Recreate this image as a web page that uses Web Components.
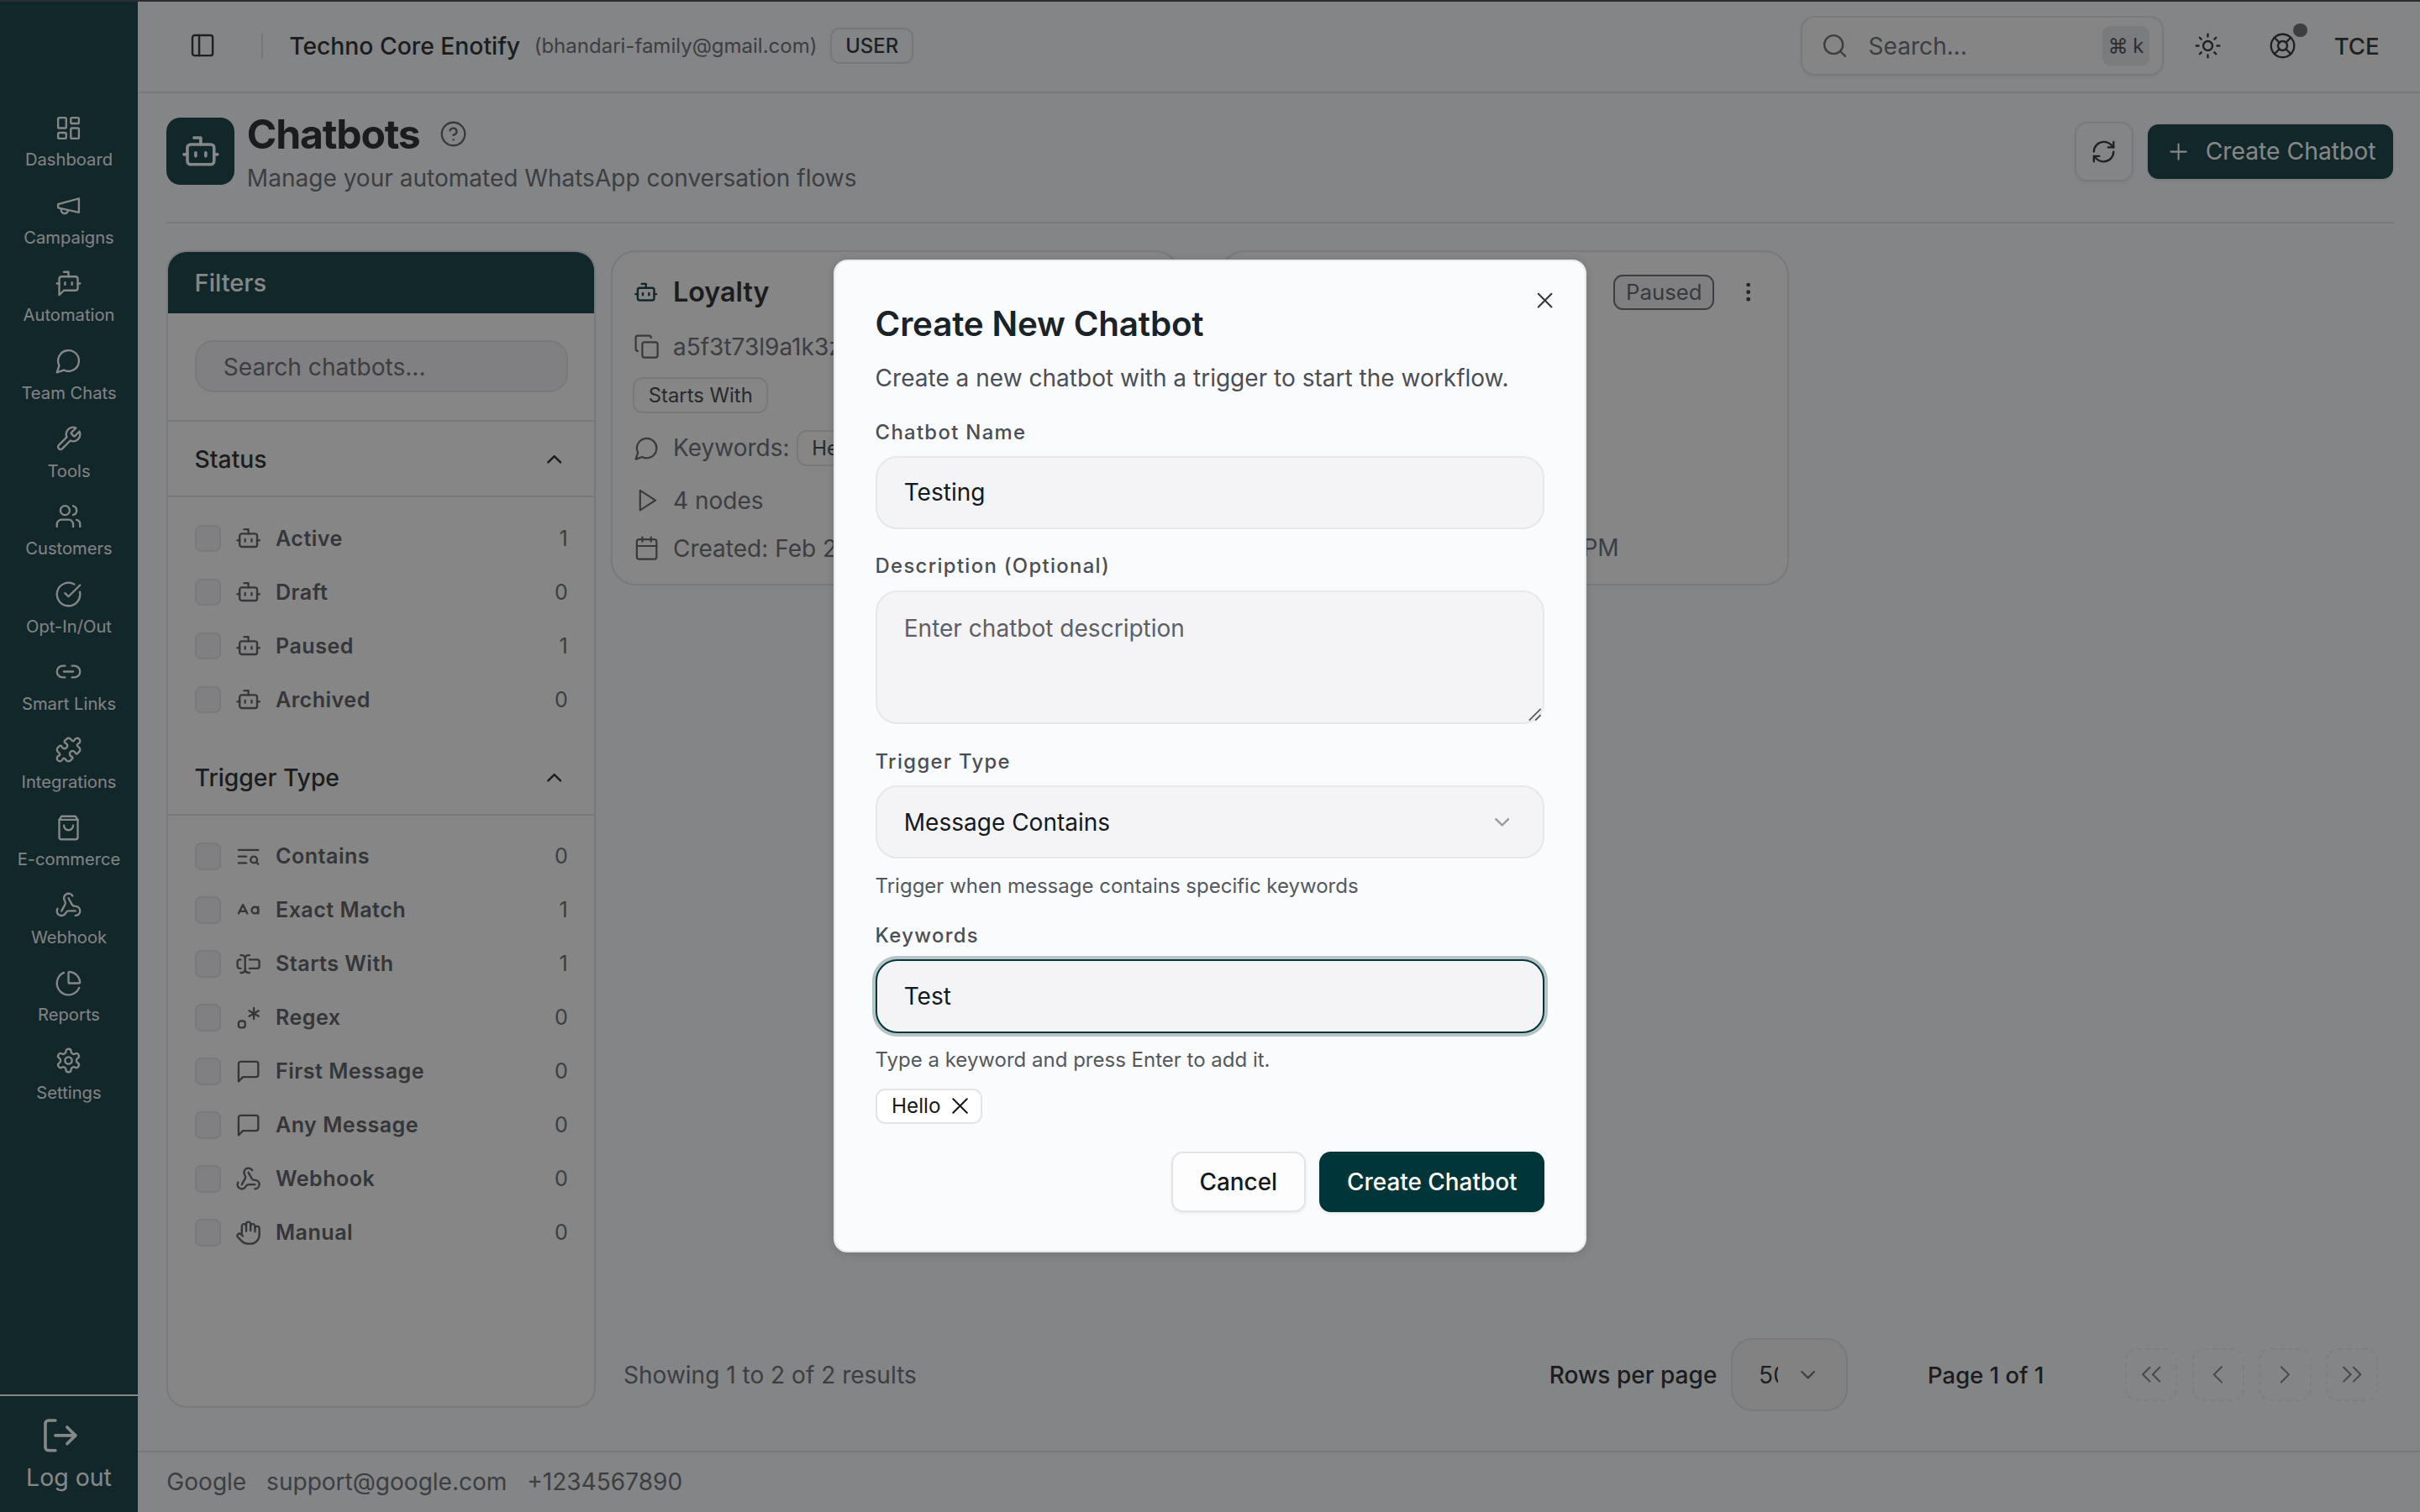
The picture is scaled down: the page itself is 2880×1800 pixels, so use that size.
<!DOCTYPE html>
<html lang="en">
<head>
<meta charset="utf-8">
<title>Chatbots</title>
<style>
  html,body{margin:0;padding:0;background:#f8fafb;overflow:hidden}
  body{font-family:Inter,"Liberation Sans",sans-serif;color:#13161a}
</style>
</head>
<body>
<app-shell>
  <side-nav slot="nav">
    <nav-item icon="dashboard">Dashboard</nav-item>
    <nav-item icon="megaphone">Campaigns</nav-item>
    <nav-item icon="botmsg">Automation</nav-item>
    <nav-item icon="circle-msg">Team Chats</nav-item>
    <nav-item icon="wrench">Tools</nav-item>
    <nav-item icon="users">Customers</nav-item>
    <nav-item icon="check">Opt-In/Out</nav-item>
    <nav-item icon="link">Smart Links</nav-item>
    <nav-item icon="puzzle">Integrations</nav-item>
    <nav-item icon="bag">E-commerce</nav-item>
    <nav-item icon="webhook">Webhook</nav-item>
    <nav-item icon="pie">Reports</nav-item>
    <nav-item icon="settings">Settings</nav-item>
  </side-nav>
  <top-bar slot="top"></top-bar>
  <page-heading slot="heading"></page-heading>
  <filter-panel slot="filters">
    <filter-group title="Status" class="first">
      <filter-row icon="bot" count="1">Active</filter-row>
      <filter-row icon="bot" count="0">Draft</filter-row>
      <filter-row icon="bot" count="1">Paused</filter-row>
      <filter-row icon="bot" count="0">Archived</filter-row>
    </filter-group>
    <filter-group title="Trigger Type">
      <filter-row icon="text-search" count="0">Contains</filter-row>
      <filter-row icon="case" count="1">Exact Match</filter-row>
      <filter-row icon="cursor-input" count="1">Starts With</filter-row>
      <filter-row icon="regex" count="0">Regex</filter-row>
      <filter-row icon="square-msg" count="0">First Message</filter-row>
      <filter-row icon="square-msg" count="0">Any Message</filter-row>
      <filter-row icon="webhook" count="0">Webhook</filter-row>
      <filter-row icon="hand" count="0">Manual</filter-row>
    </filter-group>
  </filter-panel>
  <results-area slot="results">
    <bot-card>
      <card-title slot="head" icon="bot">Loyalty</card-title>
      <meta-row icon="copy" style="margin-top:11.5px">a5f3t73l9a1k3z</meta-row>
      <ui-tag style="margin-top:7.5px">Starts With</ui-tag>
      <meta-row icon="circle-msg" style="margin-top:10.5px">Keywords: <ui-tag style="margin-left:1.5px">Hello</ui-tag></meta-row>
      <meta-row icon="play" style="margin-top:10px">4 nodes</meta-row>
      <meta-row icon="calendar" style="margin-top:7px">Created: Feb 2</meta-row>
    </bot-card>
    <bot-card>
      <status-tag slot="tail">Paused</status-tag>
      <ui-icon slot="tail" name="kebab" size="16" style="margin-left:14px;color:#2b2e33"></ui-icon>
      <meta-row icon="calendar" style="margin-top:auto">Created: Feb 2, 2026, 1:45 PM</meta-row>
    </bot-card>
    <pager-bar slot="pager"></pager-bar>
  </results-area>
  <site-footer slot="footer"></site-footer>
  <create-dialog slot="dialog"></create-dialog>
</app-shell>

<script>
const ICONS = {
  dashboard:'<rect x="3" y="3" width="7" height="9" rx="1"/><rect x="14" y="3" width="7" height="5" rx="1"/><rect x="14" y="12" width="7" height="9" rx="1"/><rect x="3" y="16" width="7" height="5" rx="1"/>',
  megaphone:'<path d="m3 11 18-5v12L3 14v-3z"/><path d="M11.6 16.8a3 3 0 1 1-5.8-1.6"/>',
  botmsg:'<path d="M12 6V2H8"/><path d="m8 18-4 4V8a2 2 0 0 1 2-2h12a2 2 0 0 1 2 2v8a2 2 0 0 1-2 2Z"/><path d="M2 12h2"/><path d="M9 11v2"/><path d="M15 11v2"/><path d="M20 12h2"/>',
  'circle-msg':'<path d="M7.9 20A9 9 0 1 0 4 16.1L2 22Z"/>',
  wrench:'<path d="M14.7 6.3a1 1 0 0 0 0 1.4l1.6 1.6a1 1 0 0 0 1.4 0l3.77-3.77a6 6 0 0 1-7.94 7.94l-6.91 6.91a2.12 2.12 0 0 1-3-3l6.91-6.91a6 6 0 0 1 7.94-7.94l-3.76 3.76z"/>',
  users:'<path d="M16 21v-2a4 4 0 0 0-4-4H6a4 4 0 0 0-4 4v2"/><circle cx="9" cy="7" r="4"/><path d="M22 21v-2a4 4 0 0 0-3-3.87"/><path d="M16 3.13a4 4 0 0 1 0 7.75"/>',
  check:'<path d="M21.801 10A10 10 0 1 1 17 3.335"/><path d="m9 11 3 3L22 4"/>',
  link:'<path d="M9 17H7A5 5 0 0 1 7 7h2"/><path d="M15 7h2a5 5 0 1 1 0 10h-2"/><line x1="8" x2="16" y1="12" y2="12"/>',
  puzzle:'<path d="M19.439 7.85c-.049.322.059.648.289.878l1.568 1.568c.47.47.706 1.087.706 1.704s-.235 1.233-.706 1.704l-1.611 1.611a.98.98 0 0 1-.837.276c-.47-.07-.802-.48-.968-.925a2.501 2.501 0 1 0-3.214 3.214c.446.166.855.497.925.968a.979.979 0 0 1-.276.837l-1.61 1.61a2.404 2.404 0 0 1-1.705.707 2.402 2.402 0 0 1-1.704-.706l-1.568-1.568a1.026 1.026 0 0 0-.877-.29c-.493.074-.84.504-1.02.968a2.5 2.5 0 1 1-3.237-3.237c.464-.18.894-.527.967-1.02a1.026 1.026 0 0 0-.289-.877l-1.568-1.568A2.402 2.402 0 0 1 1.998 12c0-.617.236-1.234.706-1.704L4.23 8.77c.24-.24.581-.353.917-.303.515.077.877.528 1.073 1.01a2.5 2.5 0 1 0 3.259-3.259c-.482-.196-.933-.558-1.01-1.073-.05-.336.062-.676.303-.917l1.525-1.525A2.402 2.402 0 0 1 12 1.998c.617 0 1.234.236 1.704.706l1.568 1.568c.23.23.556.338.877.29.493-.074.84-.504 1.02-.968a2.5 2.5 0 1 1 3.237 3.237c-.464.18-.894.527-.967 1.02Z"/>',
  bag:'<path d="M6 2 4 5v15a2 2 0 0 0 2 2h12a2 2 0 0 0 2-2V5l-2-3Z"/><path d="M4 5h16"/><path d="M16 10a4 4 0 0 1-8 0"/>',
  webhook:'<path d="M18 16.98h-5.99c-1.1 0-1.95.94-2.48 1.9A4 4 0 0 1 2 17c.01-.7.2-1.4.57-2"/><path d="m6 17 3.13-5.78c.53-.97.1-2.18-.5-3.1a4 4 0 1 1 6.89-4.06"/><path d="m12 6 3.13 5.73C15.66 12.7 16.9 13 18 13a4 4 0 0 1 0 8"/>',
  pie:'<path d="M21 12c.552 0 1.005-.449.95-.998a10 10 0 0 0-8.953-8.951c-.55-.055-.998.398-.998.95v8a1 1 0 0 0 1 1z"/><path d="M21.21 15.89A10 10 0 1 1 8 2.83"/>',
  settings:'<path d="M12.22 2h-.44a2 2 0 0 0-2 2v.18a2 2 0 0 1-1 1.73l-.43.25a2 2 0 0 1-2 0l-.15-.08a2 2 0 0 0-2.73.73l-.22.38a2 2 0 0 0 .73 2.73l.15.1a2 2 0 0 1 1 1.72v.51a2 2 0 0 1-1 1.74l-.15.09a2 2 0 0 0-.73 2.73l.22.38a2 2 0 0 0 2.73.73l.15-.08a2 2 0 0 1 2 0l.43.25a2 2 0 0 1 1 1.73V20a2 2 0 0 0 2 2h.44a2 2 0 0 0 2-2v-.18a2 2 0 0 1 1-1.73l.43-.25a2 2 0 0 1 2 0l.15.08a2 2 0 0 0 2.73-.73l.22-.39a2 2 0 0 0-.73-2.73l-.15-.08a2 2 0 0 1-1-1.74v-.5a2 2 0 0 1 1-1.74l.15-.09a2 2 0 0 0 .73-2.73l-.22-.38a2 2 0 0 0-2.73-.73l-.15.08a2 2 0 0 1-2 0l-.43-.25a2 2 0 0 1-1-1.73V4a2 2 0 0 0-2-2z"/><circle cx="12" cy="12" r="3"/>',
  logout:'<path d="M9 21H5a2 2 0 0 1-2-2V5a2 2 0 0 1 2-2h4"/><polyline points="16 17 21 12 16 7"/><line x1="21" x2="9" y1="12" y2="12"/>',
  bot:'<path d="M12 8V4H8"/><rect width="16" height="12" x="4" y="8" rx="2"/><path d="M2 14h2"/><path d="M20 14h2"/><path d="M15 13v2"/><path d="M9 13v2"/>',
  'text-search':'<path d="M21 6H3"/><path d="M10 12H3"/><path d="M10 18H3"/><circle cx="17" cy="15" r="3"/><path d="m21 19-1.9-1.9"/>',
  case:'<path d="m3 15 4-8 4 8"/><path d="M4 13h6"/><circle cx="18" cy="12" r="3"/><path d="M21 9v6"/>',
  'cursor-input':'<path d="M5 4h1a3 3 0 0 1 3 3 3 3 0 0 1 3-3h1"/><path d="M13 20h-1a3 3 0 0 1-3-3 3 3 0 0 1-3 3H5"/><path d="M5 16H4a2 2 0 0 1-2-2v-4a2 2 0 0 1 2-2h1"/><path d="M13 8h7a2 2 0 0 1 2 2v4a2 2 0 0 1-2 2h-7"/><path d="M9 7v10"/>',
  regex:'<path d="M17 3v10"/><path d="m12.67 5.5 8.66 5"/><path d="m12.67 10.5 8.66-5"/><path d="M9 17a2 2 0 0 0-2-2H5a2 2 0 0 0-2 2v2a2 2 0 0 0 2 2h2a2 2 0 0 0 2-2v-2z"/>',
  'square-msg':'<path d="M21 15a2 2 0 0 1-2 2H7l-4 4V5a2 2 0 0 1 2-2h14a2 2 0 0 1 2 2z"/>',
  hand:'<path d="M18 11V6a2 2 0 0 0-2-2a2 2 0 0 0-2 2"/><path d="M14 10V4a2 2 0 0 0-2-2a2 2 0 0 0-2 2v2"/><path d="M10 10.5V6a2 2 0 0 0-2-2a2 2 0 0 0-2 2v8"/><path d="M18 8a2 2 0 1 1 4 0v6a8 8 0 0 1-8 8h-2c-2.8 0-4.5-.86-5.99-2.34l-3.6-3.6a2 2 0 0 1 2.83-2.82L7 15"/>',
  panel:'<rect width="18" height="18" x="3" y="3" rx="2"/><path d="M9 3v18"/>',
  help:'<circle cx="12" cy="12" r="10"/><path d="M9.09 9a3 3 0 0 1 5.83 1c0 2-3 3-3 3"/><path d="M12 17h.01"/>',
  copy:'<rect width="14" height="14" x="8" y="8" rx="2"/><path d="M4 16c-1.1 0-2-.9-2-2V4c0-1.1.9-2 2-2h10c1.1 0 2 .9 2 2"/>',
  play:'<polygon points="6 3 20 12 6 21 6 3"/>',
  calendar:'<path d="M8 2v4"/><path d="M16 2v4"/><rect width="18" height="18" x="3" y="4" rx="2"/><path d="M3 10h18"/>',
  refresh:'<path d="M3 12a9 9 0 0 1 9-9 9.75 9.75 0 0 1 6.74 2.74L21 8"/><path d="M21 3v5h-5"/><path d="M21 12a9 9 0 0 1-9 9 9.75 9.75 0 0 1-6.74-2.74L3 16"/><path d="M8 16H3v5"/>',
  plus:'<path d="M5 12h14"/><path d="M12 5v14"/>',
  search:'<circle cx="11" cy="11" r="8"/><path d="m21 21-4.3-4.3"/>',
  sun:'<circle cx="12" cy="12" r="4"/><path d="M12 2v2"/><path d="M12 20v2"/><path d="m4.93 4.93 1.41 1.41"/><path d="m17.66 17.66 1.41 1.41"/><path d="M2 12h2"/><path d="M20 12h2"/><path d="m6.34 17.66-1.41 1.41"/><path d="m19.07 4.93-1.41 1.41"/>',
  buoy:'<circle cx="12" cy="12" r="10"/><path d="m4.93 4.93 4.24 4.24"/><path d="m14.83 9.17 4.24-4.24"/><path d="m14.83 14.83 4.24 4.24"/><path d="m9.17 14.83-4.24 4.24"/><circle cx="12" cy="12" r="4"/>',
  'chev-up':'<path d="m18 15-6-6-6 6"/>',
  'chev-down':'<path d="m6 9 6 6 6-6"/>',
  'chev-left':'<path d="m15 18-6-6 6-6"/>',
  'chev-right':'<path d="m9 18 6-6-6-6"/>',
  'chevs-left':'<path d="m11 17-5-5 5-5"/><path d="m18 17-5-5 5-5"/>',
  'chevs-right':'<path d="m6 17 5-5-5-5"/><path d="m13 17 5-5-5-5"/>',
  x:'<path d="M18 6 6 18"/><path d="m6 6 12 12"/>',
  kebab:'<circle cx="12" cy="12" r="1"/><circle cx="12" cy="5" r="1"/><circle cx="12" cy="19" r="1"/>'
};

function comp(tag, css, html){
  class C extends HTMLElement{
    constructor(){ super(); this.attachShadow({mode:'open'}); }
    connectedCallback(){
      if(this._done) return; this._done = true;
      const h = typeof html === 'function' ? html(this) : html;
      this.shadowRoot.innerHTML = '<style>'+css+'</style>'+h;
    }
  }
  customElements.define(tag, C);
}

comp('ui-icon',
  ':host{display:inline-flex;flex:none;line-height:0}svg{display:block;fill:none;stroke:currentColor;stroke-linecap:round;stroke-linejoin:round}',
  el=>{const s=el.getAttribute('size')||16,w=el.getAttribute('stroke')||2;
    return '<svg xmlns="http://www.w3.org/2000/svg" viewBox="0 0 24 24" width="'+s+'" height="'+s+'" stroke-width="'+w+'">'+ICONS[el.getAttribute('name')]+'</svg>';});

comp('app-shell',
  `:host{display:block;zoom:1.83673;width:1568px;height:980px;position:relative;overflow:hidden;background:#f8fafb}
   .frame{display:grid;grid-template-columns:89.3px 1fr;width:1568px;height:980px}
   .main{display:flex;flex-direction:column;min-width:0;height:980px}
   .body{flex:1;min-height:0;display:flex;flex-direction:column;padding:0 17px 25.5px 18.7px}
   .row{flex:1;min-height:0;display:flex;gap:10px;margin-top:17.5px}`,
  `<div class="frame"><slot name="nav"></slot>
    <div class="main"><slot name="top"></slot>
      <div class="body"><slot name="heading"></slot>
        <div class="row"><slot name="filters"></slot><slot name="results"></slot></div>
      </div>
      <slot name="footer"></slot>
    </div></div><slot name="dialog"></slot>`);

comp('side-nav',
  `:host{display:flex;flex-direction:column;background:#012e34;color:#fff;height:980px}
   .items{flex:1;padding-top:67.1px;display:flex;flex-direction:column}
   .out{border-top:1.1px solid #ffffff;height:76px;box-sizing:border-box;display:flex;flex-direction:column;align-items:center;padding-top:12.5px}
   ui-icon{margin-right:11px}
   .lbl{font-size:15.5px;line-height:20px;margin-top:4.5px}`,
  `<div class="items"><slot></slot></div>
   <div class="out"><ui-icon name="logout" size="26" stroke="1.8"></ui-icon><div class="lbl">Log out</div></div>`);

comp('nav-item',
  `:host{display:flex;flex-direction:column;align-items:center;height:50.4px;box-sizing:border-box;padding-top:6.7px}
   .t{font-size:11px;line-height:15px;margin-top:4.2px;white-space:nowrap;color:#f4f5f6}`,
  el=>'<ui-icon name="'+el.getAttribute('icon')+'" size="18" stroke="1.7"></ui-icon><div class="t"><slot></slot></div>');

comp('top-bar',
  `:host{display:flex;align-items:center;height:60.5px;box-sizing:border-box;border-bottom:1.1px solid #dfe0e4;padding:0 24px 0 28px;flex:none}
   .tg{width:28px;display:flex;justify-content:center;color:#1d2024}
   .sep{width:1.1px;height:17px;background:#dcdde2;margin:0 17px 0 24px}
   .name{font-size:15.4px;font-weight:500;color:#13161a;white-space:nowrap}
   .mail{font-size:13.07px;color:#5c6066;margin-left:9px;white-space:nowrap}
   .role{font-size:13px;font-weight:500;margin-left:8.5px;border:1.1px solid #dcdde2;border-radius:6px;height:23px;box-sizing:border-box;width:54px;display:flex;align-items:center;justify-content:center;color:#1a1d21}
   .sp{flex:1}
   .search{width:235.5px;height:38.5px;box-sizing:border-box;border:1.1px solid #dfe0e4;border-radius:9px;background:#fbfaf9;display:flex;align-items:center;padding:0 8px 0 12px;box-shadow:0 1px 2px rgba(0,0,0,.05);color:#5c6066}
   .search .t{font-size:15.3px;margin-left:13px;flex:1}
   .kbd{width:31px;height:26px;border-radius:5px;background:#e3e4e8;display:flex;align-items:center;justify-content:center;gap:3px;font-size:13px;color:#383b40}
   .sun{margin-left:19.5px;color:#1d2024}
   .help{margin-left:30.5px;position:relative;color:#1d2024;display:flex}
   .dot{position:absolute;width:9px;height:9px;border-radius:50%;background:#5d6066;right:-7px;top:-5.5px}
   .av{width:34px;height:35px;border-radius:50%;background:#fbfbfa;margin-left:22px;display:flex;align-items:center;justify-content:center;font-size:15px;font-weight:500;color:#1a1d21}`,
  `<div class="tg"><ui-icon name="panel" size="17.5" stroke="1.8"></ui-icon></div><div class="sep"></div>
   <div class="name">Techno Core Enotify</div><div class="mail">(bhandari-family@gmail.com)</div><div class="role">USER</div>
   <div class="sp"></div>
   <div class="search"><ui-icon name="search" size="18" stroke="1.7"></ui-icon><div class="t">Search...</div><div class="kbd"><span>⌘</span><span>k</span></div></div>
   <ui-icon class="sun" name="sun" size="18" stroke="1.7"></ui-icon>
   <div class="help"><ui-icon name="buoy" size="18" stroke="1.7"></ui-icon><span class="dot"></span></div>
   <div class="av">TCE</div>`);

comp('page-heading',
  `:host{display:flex;align-items:flex-start;height:84.3px;box-sizing:border-box;border-bottom:1.1px solid #dfe0e4;padding-top:15.5px;flex:none}
   .box{width:44px;height:44px;border-radius:9px;background:#012e34;color:#fff;display:flex;align-items:center;justify-content:center;flex:none}
   .tx{margin-left:8px;flex:1;margin-top:-4px}
   .h{display:flex;align-items:center;height:30px}
   h1{margin:0;font-size:26.2px;font-weight:700;letter-spacing:-.025em;line-height:30px;color:#13161a}
   .h ui-icon{margin-left:13px;color:#53565c}
   p{margin:1.7px 0 0;font-size:15.27px;line-height:24px;color:#5c6066}
   .act{display:flex;align-items:center;gap:9px;margin-top:3px;margin-right:.5px}
   .rf{width:38.5px;height:38.5px;box-sizing:border-box;border:1.1px solid #dfe0e4;border-radius:8px;display:flex;align-items:center;justify-content:center;color:#1d2024;box-shadow:0 1px 2px rgba(0,0,0,.05)}
   .cr{height:35px;width:159px;border-radius:7px;background:#012e34;color:#fff;display:flex;align-items:center;font-size:15.4px;box-sizing:border-box;padding-left:11.5px;gap:9px;box-shadow:0 1px 2px rgba(0,0,0,.1)}`,
  `<div class="box"><ui-icon name="bot" size="26" stroke="1.8"></ui-icon></div>
   <div class="tx"><div class="h"><h1>Chatbots</h1><ui-icon name="help" size="18" stroke="1.7"></ui-icon></div><p>Manage your automated WhatsApp conversation flows</p></div>
   <div class="act"><div class="rf"><ui-icon name="refresh" size="17" stroke="1.8"></ui-icon></div><div class="cr"><ui-icon name="plus" size="17" stroke="1.6"></ui-icon><span>Create Chatbot</span></div></div>`);

comp('filter-panel',
  `:host{display:block;width:278px;flex:none;box-sizing:border-box;border:1.1px solid #dfe0e4;border-radius:13px;overflow:hidden;background:#fcfcfb;margin-bottom:2px}
   .hd{height:39.6px;background:#012e34;color:#fff;font-size:15.8px;font-weight:500;display:flex;align-items:center;padding-left:17px}
   .sb{height:70.5px;box-sizing:border-box;padding:17.5px 17px 0 17px;border-bottom:1.1px solid #dfe0e4}
   .in{height:34px;box-sizing:border-box;border:1.1px solid #dfe0e4;border-radius:12px;background:#f0f0f1;display:flex;align-items:center;padding:1px 0 0 17.5px;font-size:15.3px;color:#5c6066}`,
  `<div class="hd">Filters</div><div class="sb"><div class="in">Search chatbots...</div></div><slot></slot>`);

comp('filter-group',
  `:host{display:block}
   .h{height:48.9px;box-sizing:border-box;border-bottom:1.1px solid #dfe0e4;display:flex;align-items:center;justify-content:space-between;padding:1px 18px 0 17px;font-size:15.4px;font-weight:500;color:#13161a}
   .b{padding:9px 17px 9px 17px}`,
  el=>'<div class="h"><span>'+el.getAttribute('title')+'</span><ui-icon name="chev-up" size="16"></ui-icon></div><div class="b"><slot></slot></div>');

comp('filter-row',
  `:host{display:flex;align-items:center;height:34.85px;font-size:13.65px;color:#4d5056}
   .c{width:17px;height:17.5px;box-sizing:border-box;border:1.1px solid #dfe0e4;border-radius:4px;background:#eff0f2;flex:none}
   ui-icon{margin-left:9.5px}
   .l{margin-left:9px;flex:1;font-weight:600;letter-spacing:.02em;white-space:nowrap}
   .n{color:#5c6066}`,
  el=>'<span class="c"></span><ui-icon name="'+el.getAttribute('icon')+'" size="17" stroke="1.8"></ui-icon><span class="l"><slot></slot></span><span class="n">'+el.getAttribute('count')+'</span>');

comp('results-area',
  `:host{flex:1;min-width:0;display:flex;flex-direction:column}
   .g{display:grid;grid-template-columns:repeat(2,368.5px);gap:26px;align-items:stretch}
   .p{margin-top:auto}`,
  `<div class="g"><slot></slot></div><div class="p"><slot name="pager"></slot></div>`);

comp('bot-card',
  `:host{display:flex;flex-direction:column;height:217px;box-sizing:border-box;border:1.1px solid #dfe0e4;border-radius:16px;padding:14px 13px 11px;background:#fcfcfb;overflow:hidden}
   .top{display:flex;align-items:center;height:24px;flex:none}
   .sp{flex:1}
   .m{display:flex;flex-direction:column;flex:1;align-items:flex-start;min-height:0}
   .tail{display:flex;align-items:center;margin-right:4px}`,
  `<div class="top"><slot name="head"></slot><div class="sp"></div><div class="tail"><slot name="tail"></slot></div></div><div class="m"><slot></slot></div>`);

comp('card-title',
  `:host{display:flex;align-items:center;font-size:17.6px;font-weight:600;color:#13161a}
   ui-icon{color:#012e34;margin-right:9.5px;margin-left:.5px}`,
  el=>'<ui-icon name="'+el.getAttribute('icon')+'" size="16"></ui-icon><slot></slot>');

comp('meta-row',
  `:host{display:flex;align-items:center;height:24px;font-size:15.27px;color:#5c6066;white-space:nowrap;flex:none}
   ui-icon{margin-right:8.5px;margin-left:.5px;color:#53565c}
   span{display:flex;align-items:center;gap:3px}`,
  el=>'<ui-icon name="'+el.getAttribute('icon')+'" size="17" stroke="1.7"></ui-icon><span><slot></slot></span>');

comp('ui-tag',
  `:host{display:inline-flex;align-items:center;height:23.5px;box-sizing:border-box;border:1.1px solid #dfe0e4;border-radius:6.5px;padding:0 9px;font-size:13px;color:#2f3237;white-space:nowrap;flex:none}`,
  `<slot></slot>`);

comp('status-tag',
  `:host{display:inline-flex;align-items:center;justify-content:center;width:65.5px;height:23px;box-sizing:border-box;border:1.1px solid #5d6066;border-radius:6px;font-size:14px;color:#53565c;background:#eeeef0}`,
  `<slot></slot>`);

comp('pager-bar',
  `:host{display:flex;align-items:center;height:47px;font-size:15.27px;padding:0 10px 0 8px;color:#5c6066}
   .sp{flex:1}
   .l{font-weight:500;color:#13161a;white-space:nowrap}
   .pg{font-size:15px}
   .sel{width:75.5px;height:47px;box-sizing:border-box;border:1.1px solid #dfe0e4;border-radius:14px;background:#f6f5f2;margin-left:9px;display:flex;align-items:center;padding-left:17px;color:#1d2024}
   .v{width:12.5px;overflow:hidden;white-space:nowrap}
   .sel ui-icon{margin-left:11.5px;color:#5c6066}
   .pg{margin-left:52px}
   .bs{display:flex;gap:9.4px;margin-left:52.5px}
   .b{width:34px;height:34px;box-sizing:border-box;border:1.1px dashed #ecedf0;border-radius:8px;display:flex;align-items:center;justify-content:center;color:#74777c}`,
  `<div>Showing 1 to 2 of 2 results</div><div class="sp"></div>
   <div class="l">Rows per page</div>
   <div class="sel"><span class="v">50</span><ui-icon name="chev-down" size="16" stroke="1.8"></ui-icon></div>
   <div class="l pg">Page 1 of 1</div>
   <div class="bs"><div class="b"><ui-icon name="chevs-left" size="22" stroke="1.2"></ui-icon></div><div class="b"><ui-icon name="chev-left" size="20" stroke="1.3"></ui-icon></div><div class="b"><ui-icon name="chev-right" size="20" stroke="1.3"></ui-icon></div><div class="b"><ui-icon name="chevs-right" size="22" stroke="1.2"></ui-icon></div></div>`);

comp('site-footer',
  `:host{display:flex;align-items:center;gap:13px;height:40px;box-sizing:border-box;border-top:1.1px solid #dfe0e4;padding-left:18.7px;font-size:15.27px;color:#5c6066;flex:none}`,
  `<span>Google</span><span>support@google.com</span><span>+1234567890</span>`);

comp('form-field',
  `:host{display:block;margin-top:16px}
   label{display:block;font-size:13px;line-height:16px;font-weight:500;letter-spacing:.055em;color:#4b4f55;margin-bottom:7.5px}`,
  el=>'<label>'+el.getAttribute('label')+'</label><slot></slot>');

comp('text-box',
  `:host{display:flex;align-items:center;height:47.5px;box-sizing:border-box;border:1.1px solid #e6e7ea;border-radius:14px;background:#f4f4f6;padding:0 18.5px 0 17.5px;font-size:15.27px;color:#14191d;position:relative}
   :host([focus]){border:1.6px solid #00353a;box-shadow:0 0 0 2.2px #b6c4c7}
   :host([area]){height:87px;align-items:flex-start;padding-top:11.5px;color:#5c6066}
   :host([area]) .t{line-height:24px}
   .sp{flex:1}
   ui-icon{color:#9a9ca0}
   svg{position:absolute;right:1px;bottom:1px}`,
  el=>{let s='<span class="t"><slot></slot></span>';
    if(el.hasAttribute('select')) s+='<span class="sp"></span><ui-icon name="chev-down" size="16"></ui-icon>';
    if(el.hasAttribute('area')) s+='<svg width="9" height="9" viewBox="0 0 9 9" stroke="#55585d" stroke-width="1"><path d="M8.5 1 1 8.5M8.5 5 5 8.5"/></svg>';
    return s;});

comp('create-dialog',
  `:host{position:absolute;inset:0;display:flex;align-items:center;justify-content:center;background:rgba(33,33,36,.54)}
   .line{position:absolute;left:0;right:0;top:0;height:1.1px;background:#2b2d30}
   .m{width:488px;height:644px;box-sizing:border-box;border-radius:9px;background:#fafbfd;padding:27px 26px 26px;position:relative;box-shadow:0 1px 6px rgba(0,0,0,.12);border:1.1px solid #e8e9ec}
   .x{position:absolute;right:17.5px;top:17px;color:#33363b}
   h2{margin:0;font-size:22px;line-height:28px;font-weight:600;letter-spacing:-.005em;color:#1a2327}
   .s{margin:9px 0 15px;font-size:15.27px;line-height:24px;color:#4b4f55}
   .hint{font-size:13.07px;line-height:20px;color:#54585e;margin-top:8px}
   .chip{display:inline-flex;align-items:center;height:23px;box-sizing:border-box;border:1.1px solid #e3e4e8;border-radius:6px;padding:0 4.5px 0 9.5px;font-size:13.2px;color:#14191d;margin-top:8px;gap:3.5px;background:#fff}
   .f{display:flex;justify-content:flex-end;gap:9px;margin-top:18px}
   .b{height:39px;border-radius:7.5px;box-sizing:border-box;display:flex;align-items:center;justify-content:center;font-size:15.2px;font-weight:500}
   .c{width:87px;border:1.1px solid #e3e4e8;color:#14191d;background:#fdfdfe;box-shadow:0 1px 2px rgba(0,0,0,.06)}
   .o{width:146px;background:#00353a;color:#fff;box-shadow:0 1px 2px rgba(0,0,0,.08)}`,
  `<div class="line"></div><div class="m"><ui-icon class="x" name="x" size="17" stroke="1.6"></ui-icon>
    <h2>Create New Chatbot</h2>
    <p class="s">Create a new chatbot with a trigger to start the workflow.</p>
    <form-field label="Chatbot Name" style="margin-top:0"><text-box>Testing</text-box></form-field>
    <form-field label="Description (Optional)"><text-box area>Enter chatbot description</text-box></form-field>
    <form-field label="Trigger Type"><text-box select>Message Contains</text-box></form-field>
    <div class="hint">Trigger when message contains specific keywords</div>
    <form-field label="Keywords" style="margin-top:14px"><text-box focus>Test</text-box></form-field>
    <div class="hint">Type a keyword and press Enter to add it.</div>
    <div class="chip"><span>Hello</span><ui-icon name="x" size="18" stroke="1.5"></ui-icon></div>
    <div class="f"><div class="b c">Cancel</div><div class="b o">Create Chatbot</div></div>
   </div>`);
</script>
</body>
</html>
